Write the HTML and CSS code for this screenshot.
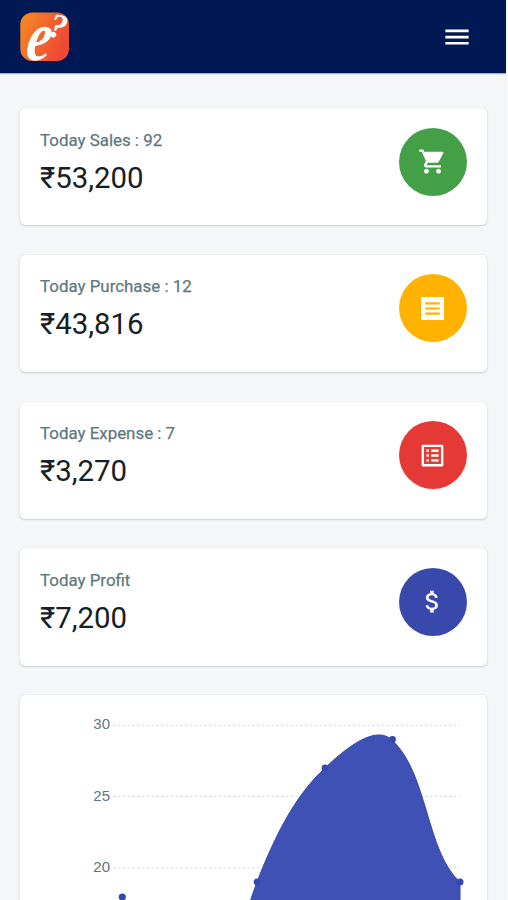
FILE: index.html
```html
<!DOCTYPE html>
<html lang="en">
<head>
<meta charset="utf-8">
<title>Dashboard</title>
<link rel="stylesheet" href="styles.css">
</head>
<body>
<div class="app">
  <header class="topbar">
    <svg class="logo" width="50" height="50" viewBox="0 0 50 50">
      <defs><linearGradient id="brand" x1="0" y1="0" x2="1" y2="0.4"><stop offset="0" stop-color="#f78b20"/><stop offset="1" stop-color="#ef4936"/></linearGradient></defs>
      <rect x="0.3" y="0.5" width="48.7" height="48.5" rx="12" fill="url(#brand)"/>
      <text class="logo-e" transform="translate(4.5 47.5) skewX(-8) scale(.92 1.18)">e</text>
      <text class="logo-q" transform="translate(27 23.5) rotate(14)">?</text>
    </svg>
    <svg class="menu" width="30" height="30" viewBox="0 0 24 24" fill="#fff"><path d="M2.7 18h18.6v-2.1H2.7V18zm0-4.9h18.6V11H2.7v2.1zm0-7.1v2.1h18.6V6H2.7z"/></svg>
  </header>
  <main class="content">
    <section class="card">
      <div><p class="label">Today Sales : 92</p><p class="value">₹53,200</p></div>
      <div class="badge green"><svg viewBox="0 0 24 24"><path d="M7 18c-1.1 0-1.99.9-1.99 2S5.9 22 7 22s2-.9 2-2-.9-2-2-2zM1 2v2h2l3.6 7.59-1.35 2.45c-.16.28-.25.61-.25.96 0 1.1.9 2 2 2h12v-2H7.42c-.14 0-.25-.11-.25-.25l.03-.12.9-1.63h7.45c.75 0 1.41-.41 1.75-1.03l3.58-6.49c.08-.14.12-.31.12-.48 0-.55-.45-1-1-1H5.21l-.94-2H1zm16 16c-1.1 0-1.99.9-1.99 2s.89 2 1.99 2 2-.9 2-2-.9-2-2-2z"/></svg></div>
    </section>
    <section class="card">
      <div><p class="label">Today Purchase : 12</p><p class="value">₹43,816</p></div>
      <div class="badge amber"><svg viewBox="0 0 24 24"><path fill-rule="evenodd" d="M2.5 2.5h19v19h-19zM6 6.8v1.8h12V6.8zm0 4.3v1.8h12v-1.8zm0 4.3v1.8h12v-1.8z"/></svg></div>
    </section>
    <section class="card">
      <div><p class="label">Today Expense : 7</p><p class="value">₹3,270</p></div>
      <div class="badge red"><svg viewBox="0 0 24 24"><path d="M19 5v14H5V5h14m1.1-2H3.9c-.5 0-.9.4-.9.9v16.2c0 .4.4.9.9.9h16.2c.4 0 .9-.5.9-.9V3.9c0-.5-.5-.9-.9-.9zM11 7h6v2h-6V7zm0 4h6v2h-6v-2zm0 4h6v2h-6v-2zM7 7h2v2H7V7zm0 4h2v2H7v-2zm0 4h2v2H7v-2z"/></svg></div>
    </section>
    <section class="card">
      <div><p class="label">Today Profit</p><p class="value">₹7,200</p></div>
      <div class="badge indigo"><svg viewBox="0 0 24 24"><path d="M11.8 10.9c-2.27-.59-3-1.2-3-2.15 0-1.09 1.01-1.85 2.7-1.85 1.78 0 2.44.85 2.5 2.1h2.21c-.07-1.72-1.12-3.3-3.21-3.81V3h-3v2.16c-1.94.42-3.5 1.68-3.5 3.61 0 2.31 1.91 3.46 4.7 4.13 2.5.6 3 1.48 3 2.41 0 .69-.49 1.79-2.7 1.79-2.06 0-2.87-.92-2.98-2.1h-2.2c.12 2.19 1.76 3.42 3.68 3.83V21h3v-2.15c1.95-.37 3.5-1.5 3.5-3.55 0-2.84-2.43-3.81-4.7-4.4z"/></svg></div>
    </section>
    <section class="card chart">
      <svg width="467" height="206" viewBox="20 695 467 206">
        <g class="grid"><path d="M113 725.3H460M113 796.3H460M113 867.8H460"/></g>
        <g class="ticks"><text x="110" y="729">30</text><text x="110" y="801">25</text><text x="110" y="872">20</text></g>
        <path class="area" d="M250 902C252 896 254 890 257 882C278 828 298 793 325 768C348 746 376 725 392 740C428 773 426 852 460 882V902Z"/>
        <g class="points"><circle cx="122.3" cy="897" r="3.6"/><circle cx="257" cy="882" r="3.4"/><circle cx="325" cy="768" r="3.4"/><circle cx="392.5" cy="739.5" r="3.4"/><circle cx="460" cy="882" r="3.5"/></g>
      </svg>
    </section>
  </main>
</div>
</body>
</html>
```
FILE: styles.css
```css
* { box-sizing: border-box; }
body { margin: 0; height: 900px; overflow: hidden; background: #f8f9fb; font-family: Roboto, sans-serif; }
.app { width: 506px; height: 900px; overflow: hidden; background: #f4f6f8; }
.topbar { height: 73px; padding: 0 34px 0 20px; display: flex; align-items: center; justify-content: space-between; background: #001853; box-shadow: 0 1px 1px #a9aec5; }
.logo { display: block; overflow: visible; }
.logo text { fill: #fff; font-family: "Liberation Serif", serif; font-weight: bold; font-style: italic; }
.logo .logo-e { font-size: 60px; }
.logo .logo-q { font-size: 35px; }
.content { padding: 35px 19px 0 20px; display: flex; flex-direction: column; gap: 29.5px; }
.card { height: 117.3px; flex: none; padding: 19.6px 20.4px 0 20px; display: flex; justify-content: space-between; align-items: flex-start; background: #fff; border-radius: 5px; box-shadow: 0 0 1px rgba(60, 70, 85, .22), 0 1px 2px rgba(60, 70, 85, .22); }
.label { margin: 0; font-size: 16.9px; line-height: 24px; font-weight: 400; color: #607880; -webkit-text-stroke: .25px #607880; }
.value { margin: 8px 0 0; font-size: 29.4px; line-height: 36px; color: #172025; }
.badge { width: 68px; height: 68px; border-radius: 50%; display: flex; align-items: center; justify-content: center; }
.badge svg { width: 29px; height: 29px; fill: #fff; }
.green { background: #43a047; }
.amber { background: #ffb300; }
.red { background: #e53935; }
.indigo { background: #3949ab; }
.chart { height: 230px; padding: 0; overflow: hidden; }
.grid path { fill: none; stroke: #dedede; stroke-width: 1.2; stroke-dasharray: 2.4 2.4; }
.ticks { font-family: "Liberation Sans", sans-serif; font-size: 15px; text-anchor: end; fill: #65757c; }
.area { fill: #3f51b5; stroke: #3548ae; stroke-width: 1; }
.points { fill: #3548ae; }
```
